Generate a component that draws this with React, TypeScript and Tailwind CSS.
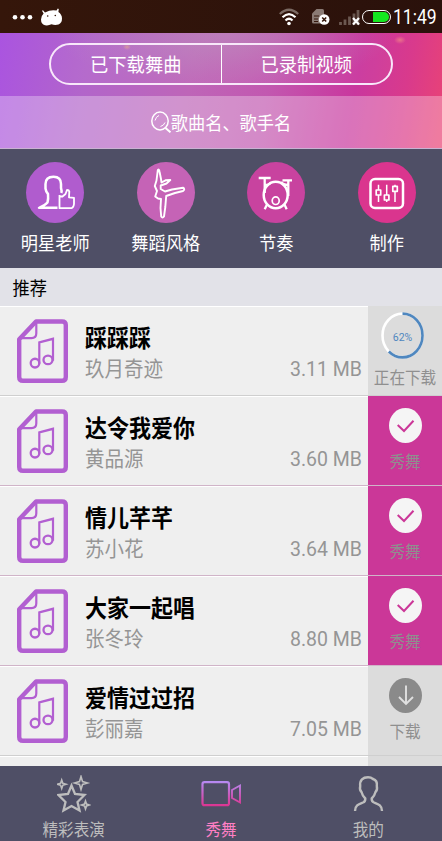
import type { ReactNode } from "react";

type SongState = "downloading" | "ready" | "none";

const songs: { title: string; artist: string; size: string; state: SongState }[] = [
  { title: "踩踩踩", artist: "玖月奇迹", size: "3.11 MB", state: "downloading" },
  { title: "达令我爱你", artist: "黄品源", size: "3.60 MB", state: "ready" },
  { title: "情儿芊芊", artist: "苏小花", size: "3.64 MB", state: "ready" },
  { title: "大家一起唱", artist: "张冬玲", size: "8.80 MB", state: "ready" },
  { title: "爱情过过招", artist: "彭丽嘉", size: "7.05 MB", state: "none" },
];

function StatusBar() {
  return (
    <div className="flex h-[33px] shrink-0 items-center bg-linear-to-r from-[#35160a] to-[#2a110b] pl-[12px] pr-[7px] text-white">
      <svg width="52" height="20" viewBox="0 0 52 20" fill="white">
        <circle cx="3" cy="10.3" r="2.3" />
        <circle cx="10.5" cy="10.3" r="2.3" />
        <circle cx="18" cy="10.3" r="2.3" />
        <path d="M31 3.2 33 5.5Q39 2.3 44.5 3.6L45.8 1.6 46.8 2 46.4 5Q50 7.500 50 11.500 50 16 46.500 17.500 43 18.400 39.500 17.300 36.500 18.900 33 18.300 29 17 29 12.500 29 9 31.600 6.500L30 3.700Z" />
        <circle cx="35.7" cy="9" r="0.8" fill="#35160a" />
        <circle cx="43.3" cy="8.5" r="0.8" fill="#35160a" />
      </svg>
      <div className="ml-auto flex items-center">
        <svg width="20" height="18" viewBox="0 0 20 18" fill="none" strokeWidth="2.2">
          <path d="M.8 6Q10-2.500 19.200 6" stroke="#7b6a63" />
          <path d="M3.500 9.300Q10 3 16.500 9.300M6.500 12.500Q10 9 13.500 12.500" stroke="white" />
          <circle cx="10" cy="15.5" r="1.8" fill="white" />
        </svg>
        <svg className="ml-[13px]" width="18" height="18" viewBox="0 0 18 18">
          <path d="M4.500 1H10.500Q12 1 12 2.500V15.500H1.500Q0 15.500 0 14V5.500Z" fill="#8a7a74" />
          <path d="M2 8H7M2 11H6M2 13.500H6" stroke="#35160a" strokeWidth="1.2" />
          <circle cx="12.2" cy="11.5" r="5.3" fill="white" />
          <path d="m10.200 9.500 4 4m0-4-4 4" stroke="#35160a" strokeWidth="1.6" />
        </svg>
        <svg className="ml-[9px]" width="21" height="18" viewBox="0 0 21 18">
          <path d="M1.500 14V17M6 11.500V17M10.500 8.500V17M15 5.500V17M19 2V17" stroke="#6b5850" strokeWidth="2.8" />
          <path d="m14 10 6 6.500m0-6.500-6 6.500" stroke="white" strokeWidth="2.2" />
        </svg>
        <div className="ml-[2px] h-[14px] w-[29px] rounded-full border-[1.5px] border-white p-px pl-[10px]">
          <div className="h-full rounded-r-full bg-[#14e820]" />
        </div>
        <span className="ml-[2px] inline-block w-[42px] origin-left scale-x-[0.9] whitespace-nowrap pt-[2px] font-[Roboto,sans-serif] text-[19.5px] leading-[20px]">11:49</span>
      </div>
    </div>
  );
}

function Header() {
  return (
    <div className="h-[116px] shrink-0 bg-[radial-gradient(ellipse_4px_3px_at_127px_14px,#e0a090c0,transparent),radial-gradient(ellipse_6px_4px_at_400px_7px,#f48a88b0,transparent),radial-gradient(ellipse_170px_55px_at_225px_0px,#b99ac080,transparent),linear-gradient(100deg,#aa54e0_0%,#b265ca_20%,#be65b8_43%,#c258b0_60%,#c9379e_79%,#d93a8c_90%,#ea4474_100%)] text-white">
      <div className="flex h-[63px] justify-center pt-[10px]">
        <div className="flex h-[42px] w-[344px] overflow-hidden rounded-full border-2 border-[#f8e8fa] bg-white/4 text-[18.3px]">
          <button className="flex flex-1 items-center justify-center border-r border-white">
            <span className="scale-y-[1.07]">已下载舞曲</span>
          </button>
          <button className="flex flex-1 items-center justify-center">
            <span className="scale-y-[1.07]">已录制视频</span>
          </button>
        </div>
      </div>
      <div className="flex h-[53px] items-center justify-center border-b border-[#c9b2d2] bg-white/30 text-[17.2px]">
        <svg width="20" height="22" viewBox="0 0 20 22" fill="none" stroke="white" strokeWidth="1.5">
          <ellipse cx="9" cy="10" rx="8.2" ry="9" />
          <path d="M4 9.500Q5 5.500 8 4.500M9.500 15.500Q13 14.500 14 11.500" strokeWidth="1" />
          <path d="m14.500 17 5 4.300" strokeWidth="2" />
        </svg>
        <span className="translate-y-px scale-y-[1.07]">歌曲名、歌手名</span>
      </div>
    </div>
  );
}

function Category({ label, color, children }: { label: string; color: string; children: ReactNode }) {
  return (
    <div className="flex flex-col items-center pt-[13px]">
      <div className={`h-[61px] w-[58px] rounded-[50%] ${color}`}>
        <svg width="58" height="61" viewBox="0 0 58 61" fill="none" stroke="white" strokeWidth="2" strokeLinejoin="round">
          {children}
        </svg>
      </div>
      <span className="mt-[8px] scale-y-[1.07] text-[17.2px] leading-[24px] text-white">{label}</span>
    </div>
  );
}

function Categories() {
  return (
    <div className="grid h-[119px] shrink-0 grid-cols-4 bg-[#4f4f66]">
      <Category label="明星老师" color="bg-[#b05cce]">
        <path d="M35.300 31Q36 29 35 26V22Q35 14.700 27.500 14.700 19.500 14.700 19.500 22V26.500Q20 30 22 32 22.500 37 21.500 40.500 19 43.500 13 45.800H31.500" strokeWidth="2.5" />
        <path d="M33.500 33V46.200H45.500Q47.500 46 48 42V35.800L43 35.300 43.300 29.500Q43 28 41 28L39.500 32 36.500 34.500H33.500" strokeWidth="1.8" />
      </Category>
      <Category label="舞蹈风格" color="bg-[#c563b6]">
        <path d="M20.800 8Q22 6.500 22.500 9.500L24 17 24.500 20.500 28.500 18.300 33.300 18 29.500 21.500 23.700 23.500V27L28 29.500 35 27.500 46 25.700Q48.500 27 46 29L38 31 29.200 34 28.300 45 27 54.500Q25.500 56.500 24.200 54.500L23.500 46 24 37 21 36.500 18.200 34.500 20 29 17.800 24 19.500 18.500Z" strokeWidth="1.9" />
      </Category>
      <Category label="节奏" color="bg-[#c8439f]">
        <ellipse cx="28.7" cy="33" rx="12" ry="13.2" strokeWidth="2.5" />
        <ellipse cx="28.7" cy="38.7" rx="3.5" ry="3.8" strokeWidth="1.7" />
        <path d="M11.700 16H23.700M35.500 18.300H45M17.700 16V31M41.300 18.300V34M18 23Q23 23 24 20M34 20Q36 23 41 23M20 42.500 17.700 47.200M37.500 42.500 39.700 47.200" strokeWidth="2.3" />
      </Category>
      <Category label="制作" color="bg-[#da358e]">
        <rect x="12.5" y="17" width="32.5" height="29" rx="4.5" strokeWidth="2.5" />
        <path d="M20.500 22.700V28M20.500 33V40M28.700 22.700V33M28.700 38V40M37 22.700V24.500M37 29.500V40" strokeWidth="1.5" />
        <rect x="18.2" y="28" width="4.5" height="5" strokeWidth="1.7" />
        <rect x="26.4" y="33" width="4.5" height="5" strokeWidth="1.7" />
        <rect x="34.8" y="24.3" width="4.5" height="5" strokeWidth="1.7" />
      </Category>
    </div>
  );
}

function MusicFile() {
  return (
    <svg className="shrink-0" width="51" height="64" viewBox="0 0 51 63" preserveAspectRatio="none" fill="none" stroke="#b25fd1">
      <path d="M19 2.400H45Q48.800 2.400 48.800 6V57Q48.800 60.800 45 60.800H6Q2.200 60.800 2.200 57V20Z" strokeWidth="4.4" strokeLinejoin="round" />
      <path d="M19.300 4V14Q19.300 18.800 14.500 18.800H4" strokeWidth="2.2" />
      <ellipse cx="18" cy="43.4" rx="4.3" ry="4.3" strokeWidth="2.3" />
      <ellipse cx="31" cy="40.3" rx="4.5" ry="4.2" strokeWidth="2.3" />
      <path d="M22.300 44V23L36 19.500V41" strokeWidth="2.2" />
    </svg>
  );
}

function SongAction({ state }: { state: SongState }) {
  if (state === "downloading") {
    return (
      <div className="flex w-[74px] flex-col items-center bg-[#dcdcdc] pt-[6px]">
        <div className="relative mr-[5px] h-[47px] w-[43px]">
          <svg width="43" height="47" viewBox="0 0 43 43" preserveAspectRatio="none" fill="none" strokeWidth="2.6">
            <circle cx="21.5" cy="21.5" r="20" stroke="white" />
            <circle cx="21.5" cy="21.5" r="20" stroke="#4f87bf" pathLength="100" strokeDasharray="62 38" transform="rotate(-90 21.5 21.5)" />
          </svg>
          <span className="absolute inset-0 flex items-center justify-center pt-[4px] font-[Roboto,sans-serif] text-[10.5px] text-[#4f87bf]">62%</span>
        </div>
        <span className="mt-[8px] scale-y-[1.07] text-[15.6px] leading-[20px] text-[#8f8f8f]">正在下载</span>
      </div>
    );
  }
  if (state === "ready") {
    return (
      <div className="flex w-[74px] flex-col items-center bg-[#cb3798] pt-[12px]">
        <svg width="33" height="35" viewBox="0 0 33 35" fill="none">
          <ellipse cx="16.5" cy="17.5" rx="16.5" ry="17.5" fill="#f5f5f5" />
          <path d="m8.700 17 6.300 6 9.500-10.300" stroke="#cb3798" strokeWidth="2" />
        </svg>
        <span className="mt-[8px] scale-y-[1.07] text-[15.6px] leading-[20px] text-[#8f8f8f]">秀舞</span>
      </div>
    );
  }
  return (
    <div className="flex w-[74px] flex-col items-center bg-[#dcdcdc] pt-[12px]">
      <svg width="33" height="35" viewBox="0 0 33 35" fill="none">
        <ellipse cx="16.5" cy="17.5" rx="16.5" ry="17.5" fill="#8a8a8a" />
        <path d="M17 7.500V26M10 19 17 26 24 19" stroke="#e0e0e0" strokeWidth="1.9" />
      </svg>
      <span className="mt-[8px] scale-y-[1.07] text-[15.6px] leading-[20px] text-[#8f8f8f]">下载</span>
    </div>
  );
}

function SongList() {
  return (
    <div className="min-h-0 flex-1 overflow-hidden bg-[#efefef]">
      {songs.map((song) => (
        <div key={song.title} className={`flex h-[90px] border-b ${song.state === "ready" ? "border-[#d0b4c8]" : "border-[#cfcfcf]"}`}>
          <div className="flex flex-1 border-t border-white pl-[17px] pt-[12px]">
            <MusicFile />
            <div className="ml-[17px] flex flex-1 flex-col items-start pt-[4px]">
              <span className="scale-y-[1.07] text-[22px] font-bold leading-[27px] text-black">{song.title}</span>
              <div className="flex w-full items-center justify-between pr-[6px] text-[#959595]">
                <span className="scale-y-[1.07] text-[19.5px] leading-[30px]">{song.artist}</span>
                <span className="translate-y-[1.5px] scale-y-[1.07] pt-[3px] font-[Roboto,sans-serif] text-[19.5px] leading-[30px]">{song.size}</span>
              </div>
            </div>
          </div>
          <SongAction state={song.state} />
        </div>
      ))}
      <div className="flex h-[90px]">
        <div className="flex-1 border-t border-white" />
        <div className="w-[74px] bg-[#dcdcdc]" />
      </div>
    </div>
  );
}

function TabBar() {
  return (
    <nav className="grid h-[75px] shrink-0 grid-cols-3 bg-[#4f4f66] pt-[9px] text-[15.6px] leading-[20px] text-[#bdbdbd]">
      <div className="flex flex-col items-center">
        <svg width="34" height="38" viewBox="0 0 34 38" fill="none" stroke="#bdbdbd" strokeWidth="2.3">
          <path d="M14.500 10.500 18 19 27.500 20 20.500 27 22.500 35.500 14.500 31 6.500 35.500 8.500 27 1.500 20 11 19Z" />
          <path d="M4.700 5 5.800 8.300 9 9.300 5.800 10.300 4.700 13.500 3.600 10.300.5 9.300 3.600 8.300ZM24 1.500 25.500 6.500 30.500 8 25.500 9.500 24 14.500 22.500 9.500 17.500 8 22.500 6.500ZM28.500 26 29.500 29 32.500 30 29.500 31 28.500 34 27.500 31 24.500 30 27.500 29Z" strokeWidth="1.6" />
        </svg>
        <span className="mt-[6px] scale-y-[1.07]">精彩表演</span>
      </div>
      <div className="flex flex-col items-center text-[#ff7fc4]">
        <svg width="40" height="38" viewBox="0 0 40 38" fill="none" stroke="url(#camera)" strokeWidth="2.2">
          <defs>
            <linearGradient id="camera" x1="0" y1="6" x2="0" y2="31" gradientUnits="userSpaceOnUse">
              <stop stopColor="#b58cf4" />
              <stop offset="1" stopColor="#dc3490" />
            </linearGradient>
          </defs>
          <rect x="1.5" y="7.2" width="26.5" height="23" rx="2" />
          <path d="M31 15 39 10.500V27.500L31 23Z" strokeWidth="1.9" />
        </svg>
        <span className="mt-[6px] scale-y-[1.07]">秀舞</span>
      </div>
      <div className="flex flex-col items-center">
        <svg width="31" height="38" viewBox="0 0 31 38" fill="none" stroke="#bdbdbd" strokeWidth="2.4" strokeLinejoin="round">
          <path d="M2 36C2 30 6 29 10 27.500Q12.500 26.500 12.300 23.500 9.500 21 8.500 17 6.300 15 7.200 11C6.500 5 10 2.300 15 2.300Q18 2.300 20 4C23 5 24.300 8 23.800 11Q24.700 15 22.500 17 21.500 21 18.700 23.500 18.500 26.500 21 27.500C25 29 29 30 29 36" />
        </svg>
        <span className="mt-[6px] scale-y-[1.07]">我的</span>
      </div>
    </nav>
  );
}

export default function App() {
  return (
    <div className="flex h-[841px] w-[442px] flex-col overflow-hidden font-['Noto_Sans_CJK_SC',sans-serif]">
      <StatusBar />
      <Header />
      <Categories />
      <div className="flex h-[38px] shrink-0 items-center bg-[#e2e2e8] pl-[12.5px] pt-px text-[17.2px] text-black">
        <span className="scale-y-[1.07]">推荐</span>
      </div>
      <SongList />
      <TabBar />
    </div>
  );
}
